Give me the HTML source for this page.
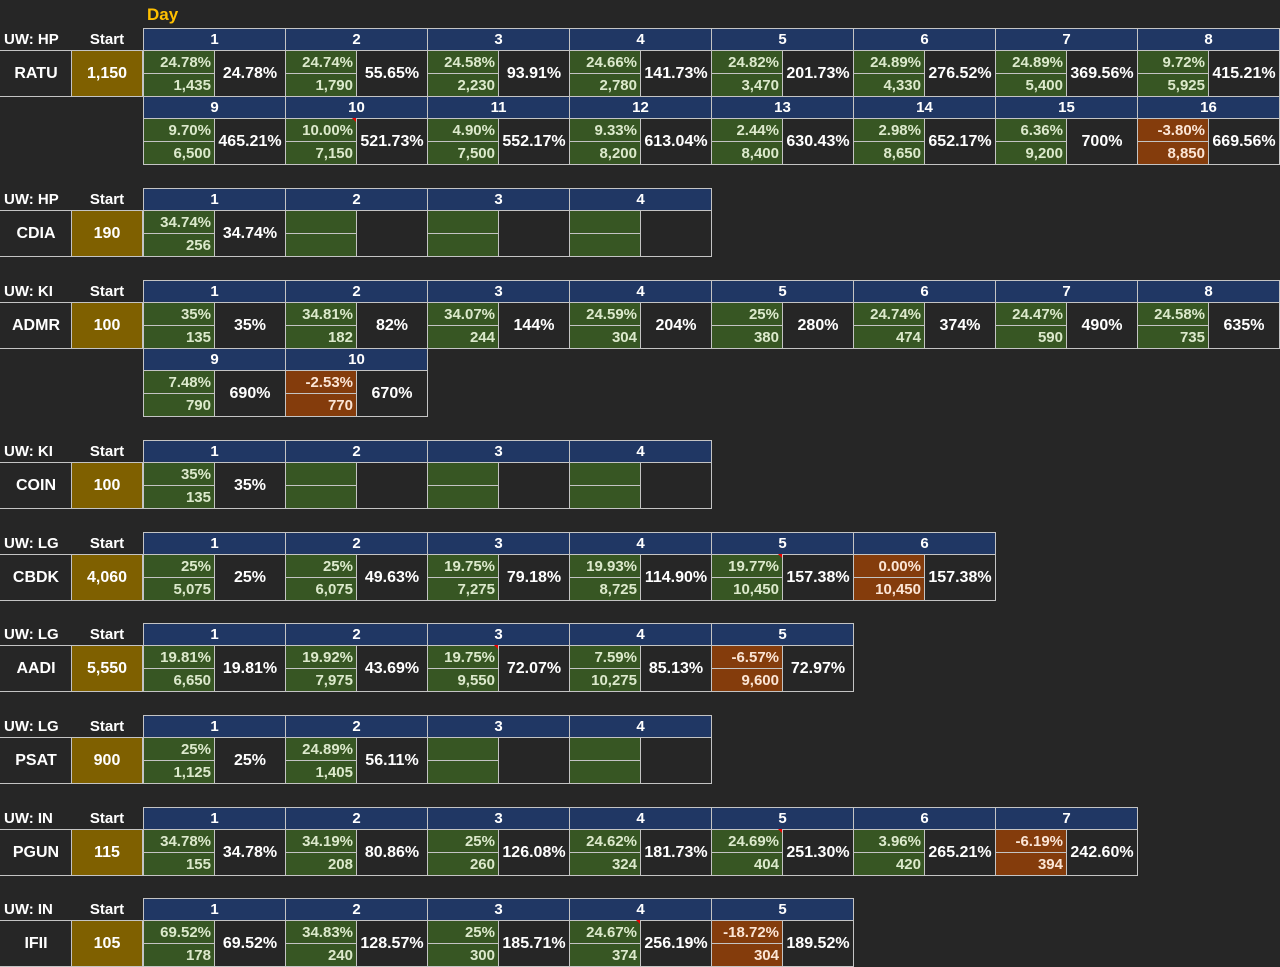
<!DOCTYPE html>
<html><head><meta charset="utf-8"><style>
body{margin:0;width:1280px;height:967px;background:#262626;overflow:hidden;font-family:"Liberation Sans",Arial,sans-serif;font-weight:bold;font-size:15px;color:#fff;position:relative}
.d{position:absolute;width:143px;height:69px}
.d *{position:absolute;box-sizing:border-box;border:1px solid #c4c4c4;font-style:normal;text-decoration:none;font-weight:bold;white-space:nowrap}
.d b{left:0;top:0;width:143px;height:23px;background:#203764;text-align:center;line-height:22px}
.d i{left:0;width:72px;height:24px;background:#375623;color:#dce9cc;text-align:right;padding-right:3px;line-height:23px}
.d i:nth-of-type(1){top:22px}
.d i:nth-of-type(2){top:45px}
.d i.o{background:#843c0c;color:#fbe5d6}
.d u{left:71px;top:22px;width:72px;height:47px;text-align:center;line-height:45px;background:#262626;font-size:16px}
.d.r i:nth-of-type(1)::after{content:"";position:absolute;right:-1px;top:-1px;border:0;width:0;height:0;border-top:5px solid #e00;border-left:5px solid transparent}
.lab{position:absolute;left:4px;height:22px;line-height:24px}
.st{position:absolute;left:71px;width:72px;text-align:center;height:22px;line-height:24px}
.tk{position:absolute;left:0;width:72px;height:47px;box-sizing:border-box;border:1px solid #c4c4c4;border-left:0;border-right:0;text-align:center;line-height:45px;font-size:16px}
.gd{position:absolute;left:71px;width:72px;height:47px;box-sizing:border-box;border:1px solid #c4c4c4;background:#7f6000;text-align:center;line-height:45px;font-size:16px}
.day{position:absolute;left:147px;top:5px;color:#ffc000;font-size:17px}
</style></head><body>
<div class="day">Day</div>

<div class="lab" style="top:28px">UW: HP</div><div class="st" style="top:28px">Start</div>
<div class="tk" style="top:50px">RATU</div><div class="gd" style="top:50px">1,150</div>
<div class="d" style="left:143px;top:28px"><b>1</b><i>24.78%</i><i>1,435</i><u>24.78%</u></div>
<div class="d" style="left:285px;top:28px"><b>2</b><i>24.74%</i><i>1,790</i><u>55.65%</u></div>
<div class="d" style="left:427px;top:28px"><b>3</b><i>24.58%</i><i>2,230</i><u>93.91%</u></div>
<div class="d" style="left:569px;top:28px"><b>4</b><i>24.66%</i><i>2,780</i><u>141.73%</u></div>
<div class="d" style="left:711px;top:28px"><b>5</b><i>24.82%</i><i>3,470</i><u>201.73%</u></div>
<div class="d" style="left:853px;top:28px"><b>6</b><i>24.89%</i><i>4,330</i><u>276.52%</u></div>
<div class="d" style="left:995px;top:28px"><b>7</b><i>24.89%</i><i>5,400</i><u>369.56%</u></div>
<div class="d" style="left:1137px;top:28px"><b>8</b><i>9.72%</i><i>5,925</i><u>415.21%</u></div>
<div class="d" style="left:143px;top:96px"><b>9</b><i>9.70%</i><i>6,500</i><u>465.21%</u></div>
<div class="d r" style="left:285px;top:96px"><b>10</b><i>10.00%</i><i>7,150</i><u>521.73%</u></div>
<div class="d" style="left:427px;top:96px"><b>11</b><i>4.90%</i><i>7,500</i><u>552.17%</u></div>
<div class="d" style="left:569px;top:96px"><b>12</b><i>9.33%</i><i>8,200</i><u>613.04%</u></div>
<div class="d" style="left:711px;top:96px"><b>13</b><i>2.44%</i><i>8,400</i><u>630.43%</u></div>
<div class="d" style="left:853px;top:96px"><b>14</b><i>2.98%</i><i>8,650</i><u>652.17%</u></div>
<div class="d" style="left:995px;top:96px"><b>15</b><i>6.36%</i><i>9,200</i><u>700%</u></div>
<div class="d" style="left:1137px;top:96px"><b>16</b><i class="o">-3.80%</i><i class="o">8,850</i><u>669.56%</u></div>

<div class="lab" style="top:188px">UW: HP</div><div class="st" style="top:188px">Start</div>
<div class="tk" style="top:210px">CDIA</div><div class="gd" style="top:210px">190</div>
<div class="d" style="left:143px;top:188px"><b>1</b><i>34.74%</i><i>256</i><u>34.74%</u></div>
<div class="d" style="left:285px;top:188px"><b>2</b><i></i><i></i><u></u></div>
<div class="d" style="left:427px;top:188px"><b>3</b><i></i><i></i><u></u></div>
<div class="d" style="left:569px;top:188px"><b>4</b><i></i><i></i><u></u></div>

<div class="lab" style="top:280px">UW: KI</div><div class="st" style="top:280px">Start</div>
<div class="tk" style="top:302px">ADMR</div><div class="gd" style="top:302px">100</div>
<div class="d" style="left:143px;top:280px"><b>1</b><i>35%</i><i>135</i><u>35%</u></div>
<div class="d" style="left:285px;top:280px"><b>2</b><i>34.81%</i><i>182</i><u>82%</u></div>
<div class="d" style="left:427px;top:280px"><b>3</b><i>34.07%</i><i>244</i><u>144%</u></div>
<div class="d" style="left:569px;top:280px"><b>4</b><i>24.59%</i><i>304</i><u>204%</u></div>
<div class="d" style="left:711px;top:280px"><b>5</b><i>25%</i><i>380</i><u>280%</u></div>
<div class="d" style="left:853px;top:280px"><b>6</b><i>24.74%</i><i>474</i><u>374%</u></div>
<div class="d" style="left:995px;top:280px"><b>7</b><i>24.47%</i><i>590</i><u>490%</u></div>
<div class="d" style="left:1137px;top:280px"><b>8</b><i>24.58%</i><i>735</i><u>635%</u></div>
<div class="d" style="left:143px;top:348px"><b>9</b><i>7.48%</i><i>790</i><u>690%</u></div>
<div class="d" style="left:285px;top:348px"><b>10</b><i class="o">-2.53%</i><i class="o">770</i><u>670%</u></div>

<div class="lab" style="top:440px">UW: KI</div><div class="st" style="top:440px">Start</div>
<div class="tk" style="top:462px">COIN</div><div class="gd" style="top:462px">100</div>
<div class="d" style="left:143px;top:440px"><b>1</b><i>35%</i><i>135</i><u>35%</u></div>
<div class="d" style="left:285px;top:440px"><b>2</b><i></i><i></i><u></u></div>
<div class="d" style="left:427px;top:440px"><b>3</b><i></i><i></i><u></u></div>
<div class="d" style="left:569px;top:440px"><b>4</b><i></i><i></i><u></u></div>

<div class="lab" style="top:532px">UW: LG</div><div class="st" style="top:532px">Start</div>
<div class="tk" style="top:554px">CBDK</div><div class="gd" style="top:554px">4,060</div>
<div class="d" style="left:143px;top:532px"><b>1</b><i>25%</i><i>5,075</i><u>25%</u></div>
<div class="d" style="left:285px;top:532px"><b>2</b><i>25%</i><i>6,075</i><u>49.63%</u></div>
<div class="d" style="left:427px;top:532px"><b>3</b><i>19.75%</i><i>7,275</i><u>79.18%</u></div>
<div class="d" style="left:569px;top:532px"><b>4</b><i>19.93%</i><i>8,725</i><u>114.90%</u></div>
<div class="d r" style="left:711px;top:532px"><b>5</b><i>19.77%</i><i>10,450</i><u>157.38%</u></div>
<div class="d" style="left:853px;top:532px"><b>6</b><i class="o">0.00%</i><i class="o">10,450</i><u>157.38%</u></div>

<div class="lab" style="top:623px">UW: LG</div><div class="st" style="top:623px">Start</div>
<div class="tk" style="top:645px">AADI</div><div class="gd" style="top:645px">5,550</div>
<div class="d" style="left:143px;top:623px"><b>1</b><i>19.81%</i><i>6,650</i><u>19.81%</u></div>
<div class="d" style="left:285px;top:623px"><b>2</b><i>19.92%</i><i>7,975</i><u>43.69%</u></div>
<div class="d r" style="left:427px;top:623px"><b>3</b><i>19.75%</i><i>9,550</i><u>72.07%</u></div>
<div class="d" style="left:569px;top:623px"><b>4</b><i>7.59%</i><i>10,275</i><u>85.13%</u></div>
<div class="d" style="left:711px;top:623px"><b>5</b><i class="o">-6.57%</i><i class="o">9,600</i><u>72.97%</u></div>

<div class="lab" style="top:715px">UW: LG</div><div class="st" style="top:715px">Start</div>
<div class="tk" style="top:737px">PSAT</div><div class="gd" style="top:737px">900</div>
<div class="d" style="left:143px;top:715px"><b>1</b><i>25%</i><i>1,125</i><u>25%</u></div>
<div class="d" style="left:285px;top:715px"><b>2</b><i>24.89%</i><i>1,405</i><u>56.11%</u></div>
<div class="d" style="left:427px;top:715px"><b>3</b><i></i><i></i><u></u></div>
<div class="d" style="left:569px;top:715px"><b>4</b><i></i><i></i><u></u></div>

<div class="lab" style="top:807px">UW: IN</div><div class="st" style="top:807px">Start</div>
<div class="tk" style="top:829px">PGUN</div><div class="gd" style="top:829px">115</div>
<div class="d" style="left:143px;top:807px"><b>1</b><i>34.78%</i><i>155</i><u>34.78%</u></div>
<div class="d" style="left:285px;top:807px"><b>2</b><i>34.19%</i><i>208</i><u>80.86%</u></div>
<div class="d" style="left:427px;top:807px"><b>3</b><i>25%</i><i>260</i><u>126.08%</u></div>
<div class="d" style="left:569px;top:807px"><b>4</b><i>24.62%</i><i>324</i><u>181.73%</u></div>
<div class="d r" style="left:711px;top:807px"><b>5</b><i>24.69%</i><i>404</i><u>251.30%</u></div>
<div class="d" style="left:853px;top:807px"><b>6</b><i>3.96%</i><i>420</i><u>265.21%</u></div>
<div class="d" style="left:995px;top:807px"><b>7</b><i class="o">-6.19%</i><i class="o">394</i><u>242.60%</u></div>

<div class="lab" style="top:898px">UW: IN</div><div class="st" style="top:898px">Start</div>
<div class="tk" style="top:920px">IFII</div><div class="gd" style="top:920px">105</div>
<div class="d" style="left:143px;top:898px"><b>1</b><i>69.52%</i><i>178</i><u>69.52%</u></div>
<div class="d" style="left:285px;top:898px"><b>2</b><i>34.83%</i><i>240</i><u>128.57%</u></div>
<div class="d" style="left:427px;top:898px"><b>3</b><i>25%</i><i>300</i><u>185.71%</u></div>
<div class="d r" style="left:569px;top:898px"><b>4</b><i>24.67%</i><i>374</i><u>256.19%</u></div>
<div class="d" style="left:711px;top:898px"><b>5</b><i class="o">-18.72%</i><i class="o">304</i><u>189.52%</u></div>
</body></html>
